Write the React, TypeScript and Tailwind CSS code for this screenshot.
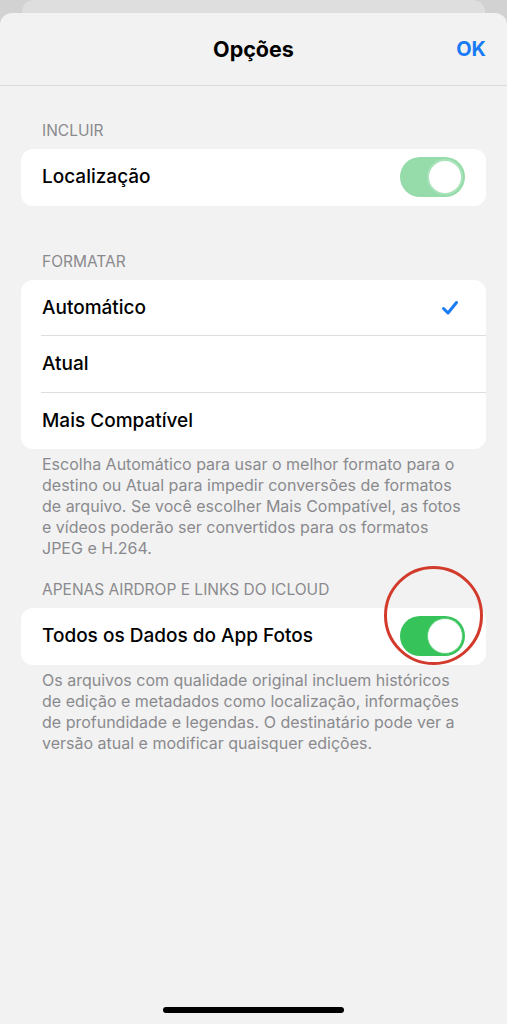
import React from 'react'

const FONT = { fontFamily: 'Inter, "Noto Sans", "Liberation Sans", sans-serif' }

function Toggle({ faded = false }: { faded?: boolean }) {
  return (
    <div
      className={`flex h-[40px] w-[65px] items-center justify-end rounded-full p-[2px] ${
        faded ? 'bg-[#95dcaa]' : 'bg-[#35c35a]'
      }`}
    >
      <div
        className={`h-[36px] w-[36px] rounded-full bg-white ${
          faded ? 'border-2 border-[#a9e3b9]' : 'border border-[#5fcf7c]'
        }`}
      />
    </div>
  )
}

function SectionLabel({ children }: { children: React.ReactNode }) {
  return (
    <div className="mb-[8px] h-[20px] pl-[42px] text-[15.5px] leading-[20px] text-[#8a8a8e]">
      {children}
    </div>
  )
}

function Footer({ children }: { children: React.ReactNode }) {
  return (
    <p className="pl-[42px] pr-[44px] pt-[5px] text-[16px] leading-[21px] text-[#8a8a8e]">{children}</p>
  )
}

function Row({ label, right, divider = false }: { label: string; right?: React.ReactNode; divider?: boolean }) {
  return (
    <div className="relative flex h-[56.5px] items-center justify-between pl-[21px] pr-[21px]">
      <span className="text-[19px] font-medium text-black">{label}</span>
      {right}
      {divider && <div className="absolute bottom-0 left-[20px] right-0 h-px bg-[#dedede]" />}
    </div>
  )
}

function Check() {
  return (
    <svg width="18" height="16" viewBox="0 0 18 16" className="mr-[6px]">
      <path d="M2.5 8.5 L7 13 L15.5 2.5" fill="none" stroke="#1a7cf5" strokeWidth="3" strokeLinecap="round" strokeLinejoin="round" />
    </svg>
  )
}

export default function App() {
  return (
    <div style={FONT} className="relative flex h-[1024px] w-full flex-col overflow-hidden bg-[#d2d2d2]">
      <div className="mx-[22px] h-[13px] shrink-0 rounded-t-[12px] bg-[#dedede]" />
      <div className="flex flex-1 flex-col rounded-t-[12px] bg-[#f2f2f2]">
        <header className="grid h-[73px] grid-cols-3 items-center border-b border-[#dcdcdc] px-[21px]">
          <div />
          <h1 className="text-center text-[21.5px] font-bold text-black">Opções</h1>
          <button className="justify-self-end text-[20px] font-bold text-[#1a7cf5]">OK</button>
        </header>

        <main className="flex flex-col pt-[35px]">
          <SectionLabel>INCLUIR</SectionLabel>
          <div className="mx-[21px] overflow-hidden rounded-[12px] bg-white">
            <Row label="Localização" right={<Toggle faded />} />
          </div>

          <div className="mt-[46px]">
            <SectionLabel>FORMATAR</SectionLabel>
          </div>
          <div className="mx-[21px] overflow-hidden rounded-[12px] bg-white">
            <Row label="Automático" right={<Check />} divider />
            <Row label="Atual" divider />
            <Row label="Mais Compatível" />
          </div>
          <Footer>
            Escolha Automático para usar o melhor formato para o destino ou Atual para impedir conversões de formatos de arquivo. Se você escolher Mais Compatível, as fotos e vídeos poderão ser convertidos para os formatos JPEG e H.264.
          </Footer>

          <div className="mt-[21px]">
            <SectionLabel>APENAS AIRDROP E LINKS DO ICLOUD</SectionLabel>
          </div>
          <div className="mx-[21px] overflow-hidden rounded-[12px] bg-white">
            <Row label="Todos os Dados do App Fotos" right={<Toggle />} />
          </div>
          <Footer>
            Os arquivos com qualidade original incluem históricos de edição e metadados como localização, informações de profundidade e legendas. O destinatário pode ver a versão atual e modificar quaisquer edições.
          </Footer>
        </main>

        <div className="mt-auto mb-[11px] flex justify-center">
          <div className="h-[6px] w-[181px] rounded-full bg-black" />
        </div>
      </div>

      <div className="pointer-events-none absolute left-[384px] top-[566px] h-[99px] w-[99px] rounded-full border-[3px] border-[#d23a2c]" />
    </div>
  )
}
